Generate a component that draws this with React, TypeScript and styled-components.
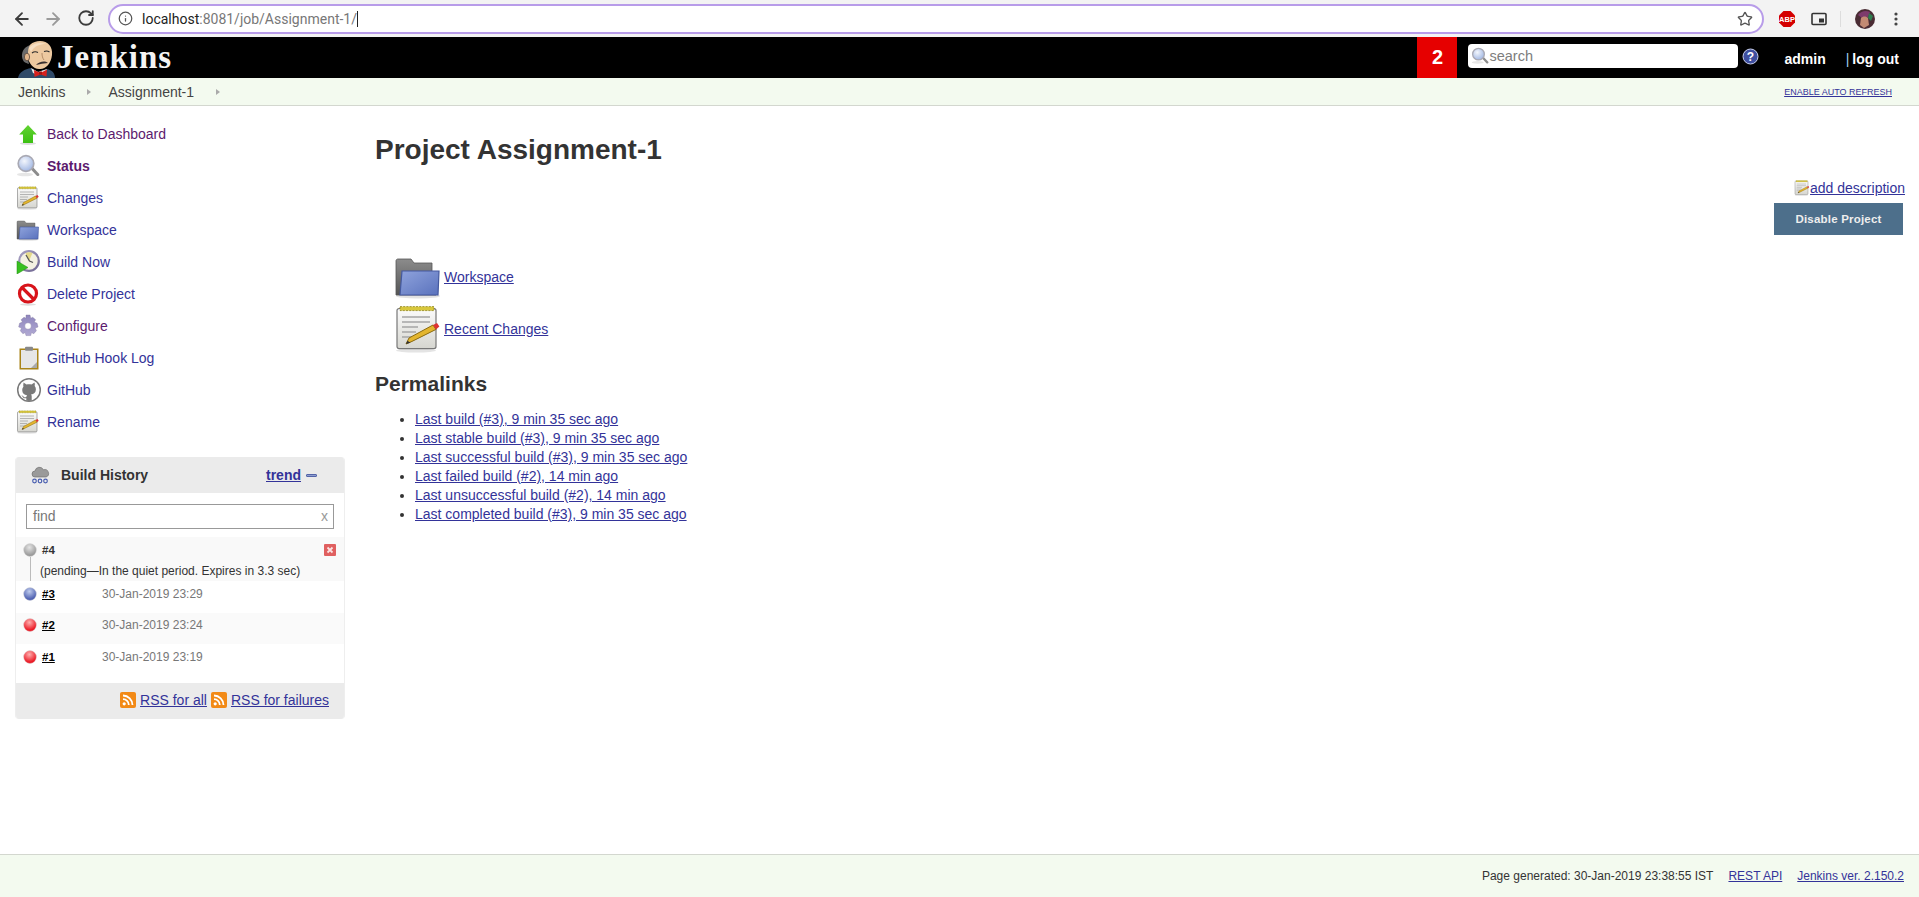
import React from "react";
import styled, { createGlobalStyle } from "styled-components";
import { ArrowLeft, ArrowRight, RotateCw, Info, Star } from "lucide-react";

const GlobalStyle = createGlobalStyle`
    html, body {
        margin: 0;
        padding: 0;
        background: #fff;
        font-family: "Liberation Sans", Arial, sans-serif;
        font-size: 14px;
        color: #333;
    }
`;

const Page = styled.div`
    display: flex;
    flex-direction: column;
    height: 897px;
    overflow: hidden;
`;

/* browser chrome */
const BrowserBar = styled.div`
    height: 37px;
    flex: none;
    display: flex;
    align-items: center;
    background: #f3f3f3;
    box-sizing: border-box;
    padding: 0 0 0 12px;
`;
const NavButton = styled.span<{ $muted?: boolean }>`
    width: 20px;
    height: 20px;
    margin-right: ${(p) => (p.$muted ? 14 : 11)}px;
    display: flex;
    color: ${(p) => (p.$muted ? "#9a9a9a" : "#3c3c3c")};
`;
const Omnibox = styled.div`
    box-sizing: border-box;
    width: 1656px;
    height: 30px;
    border: 2px solid #b89ce9;
    border-radius: 15px;
    background: #fff;
    display: flex;
    align-items: center;
    padding: 0 9px 0 8px;
    font-family: Roboto, "Liberation Sans", sans-serif;
    font-size: 14px;
`;
const UrlHost = styled.span`
    color: #222;
    margin-left: 9px;
`;
const UrlRest = styled.span`
    color: #777;
`;
const Caret = styled.span`
    width: 1px;
    height: 16px;
    background: #222;
`;
const OmniSpacer = styled.span`
    flex: 1;
`;
const Extensions = styled.div`
    display: flex;
    align-items: center;
    flex: 1;
    padding-left: 14px;
`;
const ExtSlot = styled.span<{ $gap: number }>`
    display: flex;
    margin-right: ${(p) => p.$gap}px;
`;
const ExtDivider = styled.span`
    width: 1px;
    height: 16px;
    background: #ddd;
    margin-right: 14px;
`;

/* jenkins header */
const Header = styled.header`
    height: 41px;
    flex: none;
    background: #000;
    display: flex;
    align-items: stretch;
    color: #fff;
`;
const Logo = styled.div`
    display: flex;
    align-items: flex-end;
    padding-left: 15px;
`;
const LogoText = styled.span`
    font-family: "Liberation Serif", Georgia, serif;
    font-weight: bold;
    font-size: 33px;
    line-height: 40px;
    letter-spacing: 1px;
    margin-left: 2px;
    align-self: flex-start;
    color: #f4f4f4;
`;
const HeaderSpacer = styled.div`
    flex: 1;
`;
const Badge = styled.div`
    width: 40px;
    background: #e60000;
    display: flex;
    align-items: center;
    justify-content: center;
    font-weight: bold;
    font-size: 20px;
`;
const SearchBox = styled.div`
    width: 270px;
    height: 24px;
    margin: 7px 0 0 11px;
    background: #fff;
    border-radius: 4px;
    display: flex;
    align-items: center;
    padding-left: 3px;
    box-sizing: border-box;
    color: #7d7d7d;
    font-size: 14.5px;
`;
const HelpIcon = styled.span`
    margin: 11px 0 0 4px;
    display: flex;
    align-self: flex-start;
`;
const AccountLink = styled.span`
    font-weight: bold;
    font-size: 14px;
    margin-top: 14px;
    line-height: 16px;
    align-self: flex-start;
`;
const Admin = styled(AccountLink)`
    margin-left: 25px;
`;
const Logout = styled(AccountLink)`
    margin-left: 20px;
    margin-right: 20px;
`;
const Pipe = styled.span`
    color: #9fd0ee;
    font-weight: normal;
    margin-right: 3px;
`;

/* breadcrumbs */
const Breadcrumbs = styled.div`
    height: 28px;
    flex: none;
    box-sizing: border-box;
    background: #f3faef;
    border-bottom: 1px solid #d3d7cf;
    display: flex;
    align-items: center;
    padding: 0 27px 0 18px;
    color: #444;
`;
const Crumb = styled.span`
    font-size: 14px;
`;
const CrumbArrow = styled.span<{ $gap: number }>`
    width: 0;
    height: 0;
    border-left: 4px solid #aaa;
    border-top: 3.5px solid transparent;
    border-bottom: 3.5px solid transparent;
    margin: 0 ${(p) => p.$gap}px 0 22px;
`;
const AutoRefresh = styled.a`
    margin-left: auto;
    font-size: 9px;
    color: #333399;
    text-decoration: underline;
`;

/* body */
const Content = styled.div`
    flex: 1;
    display: flex;
    min-height: 0;
`;
const Side = styled.aside`
    width: 345px;
    flex: none;
    box-sizing: border-box;
    padding: 12px 0 0 15px;
`;
const TaskRow = styled.div`
    height: 32px;
    display: flex;
    align-items: center;
`;
const TaskIcon = styled.span`
    width: 28px;
    margin-left: 1px;
    margin-right: 3px;
    display: flex;
`;
const TaskLink = styled.a<{ $visited?: boolean; $bold?: boolean }>`
    color: ${(p) => (p.$visited ? "#5c1a6e" : "#333399")};
    font-weight: ${(p) => (p.$bold ? "bold" : "normal")};
    font-size: 14px;
    text-decoration: none;
`;

const Pane = styled.section`
    margin-top: 19px;
    width: 330px;
    box-sizing: border-box;
    border-right: 1px solid #eee;
    border-left: 1px solid #eee;
    border-radius: 4px;
    overflow: hidden;
`;
const PaneHeader = styled.div`
    height: 36px;
    background: #ebebeb;
    display: flex;
    align-items: center;
    padding: 0 27px 0 14px;
    font-weight: bold;
    font-size: 14px;
    color: #333;
`;
const PaneTitle = styled.span`
    margin-left: 11px;
`;
const TrendLink = styled.a`
    margin-left: auto;
    color: #333399;
    text-decoration: underline;
`;
const Minus = styled.span`
    width: 11px;
    height: 3px;
    margin-left: 5px;
    background: #8e9fd0;
    border: 1px solid #5464a8;
    box-sizing: border-box;
    border-radius: 1px;
`;
const FindWrap = styled.div`
    padding: 11px 10px 8px;
`;
const FindBox = styled.div`
    height: 25px;
    box-sizing: border-box;
    border: 1px solid #999;
    display: flex;
    align-items: center;
    justify-content: space-between;
    padding: 0 5px 2px 6px;
    font-size: 14px;
    color: #777;
`;
const ClearX = styled.span`
    color: #999;
`;
const PendingRow = styled.div`
    box-sizing: border-box;
    background: #f9f9f9;
    height: 44px;
    position: relative;
    padding: 4px 8px 0 7px;
`;
const PendingTop = styled.div`
    display: flex;
    align-items: center;
    height: 18px;
`;
const Stem = styled.span`
    position: absolute;
    left: 14px;
    top: 20px;
    bottom: 0;
    width: 1px;
    background: #bbb;
`;
const BuildNo = styled.a<{ $plain?: boolean }>`
    margin-left: 5px;
    font-size: 11.5px;
    font-weight: bold;
    color: ${(p) => (p.$plain ? "#333" : "#000")};
    text-decoration: ${(p) => (p.$plain ? "none" : "underline")};
`;
const CancelIcon = styled.span`
    margin-left: auto;
    display: flex;
`;
const PendingNote = styled.div`
    margin: 5px 0 0 17px;
    font-size: 12px;
    line-height: 14px;
    color: #333;
    white-space: nowrap;
`;
const BuildRow = styled.div<{ $shaded?: boolean }>`
    box-sizing: border-box;
    height: 31.5px;
    display: flex;
    align-items: center;
    padding: 0 0 6px 7px;
    background: ${(p) => (p.$shaded ? "#fafafa" : "#fff")};
`;
const BuildDate = styled.span`
    position: absolute;
    left: 79px;
    font-size: 12px;
    color: #777;
`;
const BuildRowInner = styled.div`
    position: relative;
    display: flex;
    align-items: center;
    width: 100%;
`;
const HistorySpacer = styled.div`
    height: 7px;
`;
const PaneFooter = styled.div`
    box-sizing: border-box;
    height: 36px;
    background: #ebebeb;
    display: flex;
    align-items: center;
    justify-content: flex-end;
    padding: 0 15px 2px 0;
    font-size: 14px;
`;
const FooterLink = styled.a`
    color: #333399;
    text-decoration: underline;
    margin-left: 4px;
    margin-right: 4px;
    &:last-child {
        margin-right: 0;
    }
`;

const Main = styled.main`
    flex: 1;
    box-sizing: border-box;
    padding: 27px 14px 0 30px;
`;
const Title = styled.h1`
    margin: 0;
    font-size: 28px;
    line-height: 34px;
    font-weight: bold;
    color: #333;
`;
const DescriptionBlock = styled.div`
    display: flex;
    flex-direction: column;
    align-items: flex-end;
    margin-top: 12px;
`;
const AddDescription = styled.a`
    display: flex;
    align-items: center;
    color: #333399;
    font-size: 14px;
    line-height: 18px;
    text-decoration: underline;
`;
const DisableButton = styled.button`
    width: 129px;
    height: 32px;
    margin: 6px 2px 0 0;
    border: 1px solid #4d6f8b;
    background: #4d6f8b;
    color: #eee;
    font-family: "Liberation Sans", Arial, sans-serif;
    font-weight: bold;
    font-size: 11.5px;
    letter-spacing: 0.2px;
    padding: 0;
`;
const BigLinks = styled.div`
    margin: 16px 0 0 19px;
`;
const BigLinkRow = styled.div`
    height: 52px;
    display: flex;
    align-items: center;
`;
const BigLink = styled.a`
    margin-left: 2px;
    color: #333399;
    text-decoration: underline;
    font-size: 14px;
`;
const SectionTitle = styled.h2`
    margin: 16px 0 0;
    font-size: 21px;
    line-height: 26px;
    font-weight: bold;
    color: #333;
`;
const Permalinks = styled.ul`
    margin: 13px 0 0;
    padding: 0 0 0 40px;
    list-style: disc;
`;
const Permalink = styled.li`
    height: 19px;
    line-height: 19px;
    font-size: 14px;
`;
const PermalinkAnchor = styled.a`
    color: #333399;
    text-decoration: underline;
`;

const Footer = styled.footer`
    height: 43px;
    flex: none;
    box-sizing: border-box;
    background: #f3faef;
    border-top: 1px solid #d3d7cf;
    display: flex;
    align-items: center;
    justify-content: flex-end;
    padding: 0 15px 0 0;
    font-size: 12px;
    color: #333;
`;
const FootLink = styled.a`
    margin-left: 15px;
    color: #333399;
    text-decoration: underline;
`;

/* drawings */
const JenkinsLogo = () => (
    <svg width="40" height="40" viewBox="0 0 40 40">
        <path d="M3 40c1-6 7-9 13-10l7 4 9-3c5 1 8 4 8 9z" fill="#2f4a68" />
        <path d="M16 30l7 4 9-3-2 4-7 2-5-2z" fill="#e8e8e8" />
        <path d="M12 18C10 8 18 3 25 3c8 0 13 6 12 14-1 9-7 15-13 14-6 0-10-6-12-13z" fill="#edc9a0" />
        <path d="M14 10c4-5 11-6 17-4-6 0-12 2-15 8z" fill="#f7dfc2" />
        <path d="M8 22c-2-4-1-9 2-12 1-1 3-2 5-3-2 3-2 6-2 9 0 3 0 7 1 10-2-1-5-1-6-4z" fill="#6b6b6b" />
        <ellipse cx="12" cy="19" rx="2.600" ry="3.800" fill="#e3b78c" stroke="#4a3a30" strokeWidth="0.700" />
        <path d="M17 15c2-1.500 4-1.500 6-.5M29 13.500c2-.7 4-.5 5.500.5" stroke="#2a2a2a" strokeWidth="1.100" fill="none" />
        <path d="M27 15c0 3 .5 5 2 7" stroke="#a57c58" strokeWidth="0.800" fill="none" />
        <path d="M21 27c2-2.500 6-4 9-3.500 1 .2 2 .8 3 1.500-4 .5-8 1-12 2z" fill="#3a3130" />
        <path d="M19 32l6.500 3 6.500-3.500-.5 7-6-2-6 2.500z" fill="#d9201c" />
        <rect x="24" y="33.500" width="3" height="3.200" fill="#a81512" />
    </svg>
);

const Magnifier = ({ size = 24 }: { size?: number }) => (
    <svg width={size} height={size} viewBox="0 0 24 24">
        <defs>
            <radialGradient id="lensFill" cx="40%" cy="35%" r="70%">
                <stop offset="0" stopColor="#f3f6fc" />
                <stop offset="1" stopColor="#9db4e2" />
            </radialGradient>
        </defs>
        <ellipse cx="9" cy="20.500" rx="8" ry="1.800" fill="#e6e6e6" />
        <path d="M14.500 15l2.500-1.800 6 6.500c.5.7.4 1.600-.3 2.100-.7.5-1.500.4-2.100-.2z" fill="#8c8c8c" />
        <circle cx="10" cy="9.500" r="7.800" fill="url(#lensFill)" stroke="#a9a9b3" strokeWidth="1.700" />
    </svg>
);

const UpArrow = () => (
    <svg width="24" height="24" viewBox="0 0 24 24">
        <defs>
            <linearGradient id="upFill" x1="0" y1="0" x2="0" y2="1">
                <stop offset="0" stopColor="#62d331" />
                <stop offset="1" stopColor="#3cc012" />
            </linearGradient>
        </defs>
        <ellipse cx="12" cy="21.500" rx="8" ry="1.500" fill="#ddd" />
        <path d="M12 3l8.800 9.500H17V21H7v-8.500H3.200z" fill="url(#upFill)" />
    </svg>
);

const Notepad = ({ size = 24 }: { size?: number }) => (
    <svg width={size} height={size} viewBox="0 0 24 24">
        <defs>
            <linearGradient id="padFill" x1="0" y1="0" x2="0" y2="1">
                <stop offset="0" stopColor="#fbfbfb" />
                <stop offset="1" stopColor="#d6d6d0" />
            </linearGradient>
        </defs>
        <ellipse cx="11" cy="22.800" rx="10" ry="1" fill="#e4e4e4" />
        <rect x="1.500" y="1.800" width="19.500" height="20" rx="1" fill="url(#padFill)" stroke="#777" strokeWidth="0.600" />
        <rect x="3" y="0.800" width="17" height="2" fill="#d8c73c" stroke="#8f8420" strokeWidth="0.400" strokeDasharray="1 0.600" />
        <path d="M4 6h14M4 8.500h14M4 11h8M4 13.500h7M4 16h5" stroke="#a5a5a5" strokeWidth="0.800" />
        <path d="M6 19.500l1.500-3L19.500 10l1.500 2.200-12 6z" fill="#e3b52e" stroke="#8a6a10" strokeWidth="0.500" />
        <path d="M19.500 10l2-1 1.200 1.800-1.700 1.400z" fill="#d33" />
        <path d="M6 19.500l.7-1.600 1.600 1z" fill="#333" />
    </svg>
);

const Folder = ({ size = 24 }: { size?: number }) => (
    <svg width={size} height={size} viewBox="0 0 24 24">
        <defs>
            <linearGradient id="folderBack" x1="0" y1="0" x2="0" y2="1">
                <stop offset="0" stopColor="#8c8c8c" />
                <stop offset="1" stopColor="#555" />
            </linearGradient>
            <linearGradient id="folderFront" x1="0" y1="0" x2="1" y2="1">
                <stop offset="0" stopColor="#8fa3dc" />
                <stop offset="1" stopColor="#5a72bd" />
            </linearGradient>
        </defs>
        <ellipse cx="12" cy="21.500" rx="11" ry="1.300" fill="#e2e2e2" />
        <path d="M1 21V4c0-.6.4-1 1-1h6.500l1.500 2h9v4l2 12z" fill="url(#folderBack)" stroke="#555" strokeWidth="0.400" />
        <path d="M3 21l1-12h18.500L22 21z" fill="url(#folderFront)" stroke="#44599f" strokeWidth="0.600" />
    </svg>
);

const Clock = () => (
    <svg width="24" height="24" viewBox="0 0 24 24">
        <defs>
            <linearGradient id="clockRing" x1="0" y1="0" x2="1" y2="1">
                <stop offset="0" stopColor="#a9a2c4" />
                <stop offset="1" stopColor="#6f6691" />
            </linearGradient>
        </defs>
        <circle cx="13" cy="11" r="9.800" fill="#f4f1e2" stroke="url(#clockRing)" strokeWidth="2.200" />
        <path d="M13 11L9.500 3.200a8.500 8.500 0 0 1 7-.2z" fill="#e5d98a" />
        <path d="M10 5l3.500 6 3.500 1.500" stroke="#555" strokeWidth="1.300" fill="none" />
        <path d="M1 11l11 6.500L1 24z" fill="#38c01f" stroke="#1f8d10" strokeWidth="0.500" />
    </svg>
);

const NoEntry = () => (
    <svg width="24" height="24" viewBox="0 0 24 24">
        <ellipse cx="12" cy="22.500" rx="8" ry="1.200" fill="#ddd" />
        <circle cx="12" cy="11.500" r="8.500" fill="#fff" stroke="#d8141b" strokeWidth="3.200" />
        <path d="M6 5.500l12 12" stroke="#d8141b" strokeWidth="3.200" />
    </svg>
);

const Gear = () => (
    <svg width="24" height="24" viewBox="0 0 24 24">
        <defs>
            <linearGradient id="gearFill" x1="0" y1="0" x2="0" y2="1">
                <stop offset="0" stopColor="#8f86bd" />
                <stop offset="1" stopColor="#b0a9d3" />
            </linearGradient>
        </defs>
        <path
            fillRule="evenodd"
            d="M10 1h4l.7 3.200 2-.9 2.900 2.400-1.400 2.400 2.900 1.100.9 3.800-2.900 1.100 1.300 2.600-2.600 3-2.300-1.100-.8 3H10l-.8-3-2.300 1.100-2.600-3 1.300-2.600-2.900-1.100.9-3.800 2.900-1.100-1.400-2.400 2.900-2.400 2 .9zM12 8.700a3.300 3.300 0 1 0 0 6.600 3.300 3.300 0 0 0 0-6.600z"
            fill="url(#gearFill)"
            stroke="#7d759f"
            strokeWidth="0.400"
        />
    </svg>
);

const Clipboard = () => (
    <svg width="24" height="24" viewBox="0 0 24 24">
        <rect x="3.500" y="2.500" width="19" height="21" fill="#a98418" />
        <rect x="5" y="4" width="16" height="18" fill="#e6e6e6" />
        <path d="M15 22l6-6v6z" fill="#aaa" />
        <rect x="9" y="0.800" width="8" height="4" rx="1" fill="#888" />
    </svg>
);

const GithubMark = () => (
    <svg width="26" height="26" viewBox="0 0 26 26">
        <circle cx="13" cy="13" r="11.300" fill="#fff" stroke="#7a7a7a" strokeWidth="1.500" />
        <path
            d="M7.500 5.500l3 2c1.600-.5 3.400-.5 5 0l3-2c.4 1.200.5 2.400.2 3.500.8 1 1.200 2 1.200 3.200 0 3.300-2 4.800-4.900 5.200.5.500.7 1.100.7 1.800v4.300c-1.800.5-3.600.5-5.400 0v-2.300c-1.700.4-3 0-3.700-1.400-.3-.6-.8-1-1.300-1.300 1-.2 1.700.3 2.200 1 .7 1 1.700 1 2.800.6.100-.9.300-1.500.8-1.900-2.900-.4-4.900-1.900-4.900-5.200 0-1.200.4-2.200 1.200-3.200-.3-1.100-.2-2.300.1-3.500z"
            fill="#7a7a7a"
        />
    </svg>
);

const CloudIcon = () => (
    <svg width="20" height="20" viewBox="0 0 20 20">
        <path d="M5 12a3 3 0 0 1 0-6 4.500 4.500 0 0 1 8.500-1.200A3.600 3.600 0 0 1 16 12z" fill="#9a9a9a" stroke="#666" strokeWidth="0.600" />
        <circle cx="4.500" cy="16" r="1.800" fill="none" stroke="#4a5fb0" strokeWidth="1.200" />
        <circle cx="10" cy="16" r="1.800" fill="none" stroke="#4a5fb0" strokeWidth="1.200" />
        <circle cx="15.500" cy="16" r="1.800" fill="none" stroke="#4a5fb0" strokeWidth="1.200" />
    </svg>
);

const Ball = ({ color }: { color: "grey" | "blue" | "red" }) => {
    const stops = {
        grey: ["#e4e4e4", "#8f8f8f"],
        blue: ["#c0cdee", "#3d50a8"],
        red: ["#ffb0b0", "#e8000d"],
    }[color];
    return (
        <svg width="14" height="14" viewBox="0 0 14 14">
            <defs>
                <radialGradient id={`ball-${color}`} cx="45%" cy="30%" r="70%">
                    <stop offset="0" stopColor={stops[0]} />
                    <stop offset="1" stopColor={stops[1]} />
                </radialGradient>
            </defs>
            <circle cx="7" cy="7" r="6.400" fill={`url(#ball-${color})`} stroke="#ddd" strokeWidth="0.500" />
        </svg>
    );
};

const CancelX = () => (
    <svg width="12" height="12" viewBox="0 0 12 12">
        <rect width="12" height="12" rx="1" fill="#e06060" />
        <path d="M3.500 3.500l5 5M8.500 3.500l-5 5" stroke="#fbe3e3" strokeWidth="1.800" />
    </svg>
);

const Rss = () => (
    <svg width="16" height="16" viewBox="0 0 16 16">
        <rect width="16" height="16" rx="2" fill="#f28a16" />
        <circle cx="4.200" cy="11.800" r="1.600" fill="#fff" />
        <path d="M3 7.200a5.800 5.800 0 0 1 5.800 5.800M3 3.500a9.500 9.500 0 0 1 9.500 9.500" stroke="#fff" strokeWidth="1.800" fill="none" />
    </svg>
);

const Help = () => (
    <svg width="17" height="17" viewBox="0 0 17 17">
        <circle cx="8.500" cy="8.500" r="7.500" fill="#3f4fa0" stroke="#c9d0ee" strokeWidth="1" />
        <text x="8.500" y="12.600" textAnchor="middle" fontSize="12" fontWeight="bold" fill="#fff" fontFamily="Liberation Sans">?</text>
    </svg>
);

const Abp = () => (
    <svg width="18" height="18" viewBox="0 0 18 18">
        <path d="M5.500 1h7L17 5.500v7L12.500 17h-7L1 12.500v-7z" fill="#d40000" />
        <text x="9" y="11.800" textAnchor="middle" fontSize="7.500" fontWeight="bold" fill="#fff" fontFamily="Liberation Sans">ABP</text>
    </svg>
);

const Pip = () => (
    <svg width="16" height="14" viewBox="0 0 16 14">
        <rect x="1" y="1.500" width="14" height="11" rx="1" fill="none" stroke="#333" strokeWidth="1.600" />
        <rect x="8" y="6.500" width="5" height="4" fill="#333" />
    </svg>
);

const Avatar = () => (
    <svg width="20" height="20" viewBox="0 0 20 20">
        <circle cx="10" cy="10" r="10" fill="#4a2c34" />
        <path d="M3 6c3-4 8-5 12-3l-2 5-6 1z" fill="#7d3b6c" />
        <path d="M6 9c2-2 5-2 7 0l1 7-5 3-4-3z" fill="#c38a73" />
        <path d="M14 4l4 3-2 5-3-3z" fill="#2f7d4f" />
    </svg>
);

const MenuDots = () => (
    <svg width="4" height="14" viewBox="0 0 4 14">
        <circle cx="2" cy="2" r="1.600" fill="#444" />
        <circle cx="2" cy="7" r="1.600" fill="#444" />
        <circle cx="2" cy="12" r="1.600" fill="#444" />
    </svg>
);

const tasks = [
    { label: "Back to Dashboard", icon: <UpArrow />, visited: true },
    { label: "Status", icon: <Magnifier />, visited: true, bold: true },
    { label: "Changes", icon: <Notepad /> },
    { label: "Workspace", icon: <Folder /> },
    { label: "Build Now", icon: <Clock /> },
    { label: "Delete Project", icon: <NoEntry /> },
    { label: "Configure", icon: <Gear />, visited: true },
    { label: "GitHub Hook Log", icon: <Clipboard /> },
    { label: "GitHub", icon: <GithubMark /> },
    { label: "Rename", icon: <Notepad /> },
];

const builds: { no: string; date: string; color: "blue" | "red"; shaded?: boolean }[] = [
    { no: "#3", date: "30-Jan-2019 23:29", color: "blue" },
    { no: "#2", date: "30-Jan-2019 23:24", color: "red", shaded: true },
    { no: "#1", date: "30-Jan-2019 23:19", color: "red" },
];

const permalinks = [
    "Last build (#3), 9 min 35 sec ago",
    "Last stable build (#3), 9 min 35 sec ago",
    "Last successful build (#3), 9 min 35 sec ago",
    "Last failed build (#2), 14 min ago",
    "Last unsuccessful build (#2), 14 min ago",
    "Last completed build (#3), 9 min 35 sec ago",
];

export default function App() {
    return (
        <Page>
            <GlobalStyle />
            <BrowserBar>
                <NavButton><ArrowLeft size={20} strokeWidth={2.2} /></NavButton>
                <NavButton $muted><ArrowRight size={20} strokeWidth={2.2} /></NavButton>
                <NavButton><RotateCw size={18} strokeWidth={2.4} /></NavButton>
                <Omnibox>
                    <Info size={15} color="#555" />
                    <UrlHost>localhost</UrlHost>
                    <UrlRest>:8081/job/Assignment-1/</UrlRest>
                    <Caret />
                    <OmniSpacer />
                    <Star size={16} color="#555" />
                </Omnibox>
                <Extensions>
                    <ExtSlot $gap={15}><Abp /></ExtSlot>
                    <ExtSlot $gap={13}><Pip /></ExtSlot>
                    <ExtDivider />
                    <ExtSlot $gap={19}><Avatar /></ExtSlot>
                    <ExtSlot $gap={0}><MenuDots /></ExtSlot>
                </Extensions>
            </BrowserBar>

            <Header>
                <Logo>
                    <JenkinsLogo />
                    <LogoText>Jenkins</LogoText>
                </Logo>
                <HeaderSpacer />
                <Badge>2</Badge>
                <SearchBox>
                    <Magnifier size={18} />
                    search
                </SearchBox>
                <HelpIcon><Help /></HelpIcon>
                <Admin>admin</Admin>
                <Logout><Pipe>|</Pipe>log out</Logout>
            </Header>

            <Breadcrumbs>
                <Crumb>Jenkins</Crumb>
                <CrumbArrow $gap={17} />
                <Crumb>Assignment-1</Crumb>
                <CrumbArrow $gap={0} />
                <AutoRefresh>ENABLE AUTO REFRESH</AutoRefresh>
            </Breadcrumbs>

            <Content>
                <Side>
                    {tasks.map((t) => (
                        <TaskRow key={t.label}>
                            <TaskIcon>{t.icon}</TaskIcon>
                            <TaskLink $visited={t.visited} $bold={t.bold}>{t.label}</TaskLink>
                        </TaskRow>
                    ))}

                    <Pane>
                        <PaneHeader>
                            <CloudIcon />
                            <PaneTitle>Build History</PaneTitle>
                            <TrendLink>trend</TrendLink>
                            <Minus />
                        </PaneHeader>
                        <FindWrap>
                            <FindBox>find<ClearX>x</ClearX></FindBox>
                        </FindWrap>
                        <PendingRow>
                            <Stem />
                            <PendingTop>
                                <Ball color="grey" />
                                <BuildNo $plain>#4</BuildNo>
                                <CancelIcon><CancelX /></CancelIcon>
                            </PendingTop>
                            <PendingNote>(pending—In the quiet period. Expires in 3.3 sec)</PendingNote>
                        </PendingRow>
                        {builds.map((b) => (
                            <BuildRow key={b.no} $shaded={b.shaded}>
                                <BuildRowInner>
                                    <Ball color={b.color} />
                                    <BuildNo>{b.no}</BuildNo>
                                    <BuildDate>{b.date}</BuildDate>
                                </BuildRowInner>
                            </BuildRow>
                        ))}
                        <HistorySpacer />
                        <PaneFooter>
                            <Rss />
                            <FooterLink>RSS for all</FooterLink>
                            <Rss />
                            <FooterLink>RSS for failures</FooterLink>
                        </PaneFooter>
                    </Pane>
                </Side>

                <Main>
                    <Title>Project Assignment-1</Title>
                    <DescriptionBlock>
                        <AddDescription><Notepad size={16} />add description</AddDescription>
                        <DisableButton>Disable Project</DisableButton>
                    </DescriptionBlock>
                    <BigLinks>
                        <BigLinkRow><Folder size={48} /><BigLink>Workspace</BigLink></BigLinkRow>
                        <BigLinkRow><Notepad size={48} /><BigLink>Recent Changes</BigLink></BigLinkRow>
                    </BigLinks>
                    <SectionTitle>Permalinks</SectionTitle>
                    <Permalinks>
                        {permalinks.map((p) => (
                            <Permalink key={p}><PermalinkAnchor>{p}</PermalinkAnchor></Permalink>
                        ))}
                    </Permalinks>
                </Main>
            </Content>

            <Footer>
                Page generated: 30-Jan-2019 23:38:55 IST
                <FootLink>REST API</FootLink>
                <FootLink>Jenkins ver. 2.150.2</FootLink>
            </Footer>
        </Page>
    );
}
